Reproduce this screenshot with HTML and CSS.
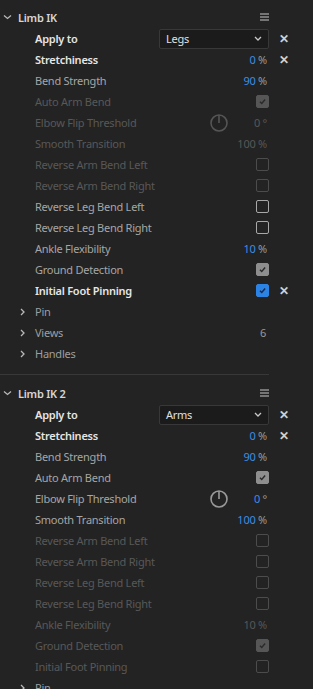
FILE: index.html
```html
<!DOCTYPE html>
<html lang="en">
<head>
  <meta charset="UTF-8" />
  <title>Limb IK</title>
  <link rel="stylesheet" href="styles.css">
</head>
<body>

<div class="section">
  <div class="head">
    <svg class="caret" width="9" height="6" viewBox="0 0 9 6"><path d="M1 1.5 L4.5 4.5 L8 1.5" /></svg>
    <span class="title">Limb IK</span>
    <svg class="menu" width="9" height="8" viewBox="0 0 9 8"><path d="M0 1h9M0 4h9M0 7h9" /></svg>
  </div>

  <div class="row on"><span class="label">Apply to</span>
    <div class="select">Legs<svg width="8" height="5" viewBox="0 0 8 5"><path d="M1 1 L4 4 L7 1" /></svg></div>
    <span class="x">✕</span></div>
  <div class="row on"><span class="label">Stretchiness</span><span class="val"><b>0</b> %</span><span class="x">✕</span></div>
  <div class="row"><span class="label">Bend Strength</span><span class="val"><b>90</b> %</span><span class="x"></span></div>
  <div class="row off"><span class="label">Auto Arm Bend</span><span class="box checked"><svg viewBox="0 0 13 13"><path d="M3.5 6.8 L5.6 8.8 L9.6 4.2" /></svg></span><span class="x"></span></div>
  <div class="row off"><span class="label">Elbow Flip Threshold</span>
    <svg class="dial" width="20" height="20" viewBox="0 0 20 20"><circle cx="10" cy="10" r="8" /><path d="M10 2 V10" /></svg>
    <span class="val deg">0 °</span><span class="x"></span></div>
  <div class="row off"><span class="label">Smooth Transition</span><span class="val">100 %</span><span class="x"></span></div>
  <div class="row off"><span class="label">Reverse Arm Bend Left</span><span class="box"></span><span class="x"></span></div>
  <div class="row off"><span class="label">Reverse Arm Bend Right</span><span class="box"></span><span class="x"></span></div>
  <div class="row"><span class="label">Reverse Leg Bend Left</span><span class="box"></span><span class="x"></span></div>
  <div class="row"><span class="label">Reverse Leg Bend Right</span><span class="box"></span><span class="x"></span></div>
  <div class="row"><span class="label">Ankle Flexibility</span><span class="val"><b>10</b> %</span><span class="x"></span></div>
  <div class="row"><span class="label">Ground Detection</span><span class="box checked"><svg viewBox="0 0 13 13"><path d="M3.5 6.8 L5.6 8.8 L9.6 4.2" /></svg></span><span class="x"></span></div>
  <div class="row on"><span class="label">Initial Foot Pinning</span><span class="box checked blue"><svg viewBox="0 0 13 13"><path d="M3.5 6.8 L5.6 8.8 L9.6 4.2" /></svg></span><span class="x">✕</span></div>

  <div class="group"><svg class="arrow" width="5" height="8" viewBox="0 0 5 8"><path d="M1 1 L4 4 L1 7" /></svg><span class="label">Pin</span></div>
  <div class="group"><svg class="arrow" width="5" height="8" viewBox="0 0 5 8"><path d="M1 1 L4 4 L1 7" /></svg><span class="label">Views</span><span class="count">6</span></div>
  <div class="group"><svg class="arrow" width="5" height="8" viewBox="0 0 5 8"><path d="M1 1 L4 4 L1 7" /></svg><span class="label">Handles</span></div>
</div>

<div class="divider"></div>

<div class="section second">
  <div class="head">
    <svg class="caret" width="9" height="6" viewBox="0 0 9 6"><path d="M1 1.5 L4.5 4.5 L8 1.5" /></svg>
    <span class="title">Limb IK 2</span>
    <svg class="menu" width="9" height="8" viewBox="0 0 9 8"><path d="M0 1h9M0 4h9M0 7h9" /></svg>
  </div>

  <div class="row on"><span class="label">Apply to</span>
    <div class="select">Arms<svg width="8" height="5" viewBox="0 0 8 5"><path d="M1 1 L4 4 L7 1" /></svg></div>
    <span class="x">✕</span></div>
  <div class="row on"><span class="label">Stretchiness</span><span class="val"><b>0</b> %</span><span class="x">✕</span></div>
  <div class="row"><span class="label">Bend Strength</span><span class="val"><b>90</b> %</span><span class="x"></span></div>
  <div class="row"><span class="label">Auto Arm Bend</span><span class="box checked"><svg viewBox="0 0 13 13"><path d="M3.5 6.8 L5.6 8.8 L9.6 4.2" /></svg></span><span class="x"></span></div>
  <div class="row"><span class="label">Elbow Flip Threshold</span>
    <svg class="dial" width="20" height="20" viewBox="0 0 20 20"><circle cx="10" cy="10" r="8" /><path d="M10 2 V10" /></svg>
    <span class="val deg"><b>0</b> °</span><span class="x"></span></div>
  <div class="row"><span class="label">Smooth Transition</span><span class="val"><b>100</b> %</span><span class="x"></span></div>
  <div class="row off"><span class="label">Reverse Arm Bend Left</span><span class="box"></span><span class="x"></span></div>
  <div class="row off"><span class="label">Reverse Arm Bend Right</span><span class="box"></span><span class="x"></span></div>
  <div class="row off"><span class="label">Reverse Leg Bend Left</span><span class="box"></span><span class="x"></span></div>
  <div class="row off"><span class="label">Reverse Leg Bend Right</span><span class="box"></span><span class="x"></span></div>
  <div class="row off"><span class="label">Ankle Flexibility</span><span class="val">10 %</span><span class="x"></span></div>
  <div class="row off"><span class="label">Ground Detection</span><span class="box checked"><svg viewBox="0 0 13 13"><path d="M3.5 6.8 L5.6 8.8 L9.6 4.2" /></svg></span><span class="x"></span></div>
  <div class="row off"><span class="label">Initial Foot Pinning</span><span class="box"></span><span class="x"></span></div>

  <div class="group"><svg class="arrow" width="5" height="8" viewBox="0 0 5 8"><path d="M1 1 L4 4 L1 7" /></svg><span class="label">Pin</span></div>
</div>

</body>
</html>
```

FILE: styles.css
```css
body { margin: 0; background: #232323; font-family: "Noto Sans", sans-serif; font-size: 11px; letter-spacing: -0.25px; color: #a6a6a6; overflow: hidden; height: 689px; }

.head { display: flex; align-items: center; height: 22px; padding-top: 6px; padding-left: 3px; width: 266px; }
.second .head { padding-top: 7px; }
.caret { fill: none; stroke: #b8b8b8; stroke-width: 1.3; margin-right: 6px; }
.title { flex: 1; color: #d6d6d6; font-weight: 600; font-size: 11px; }
.menu { stroke: #c8c8c8; stroke-width: 1; }

.row { display: flex; align-items: center; height: 21px; padding-left: 35px; padding-right: 14px; }
.label { flex: 1; white-space: nowrap; }
.row.on .label { color: #e6e6e6; font-weight: 600; }
.row.off .label { color: #585858; }
.x { width: 30px; text-align: center; color: #d0d0d0; font-size: 12px; font-weight: 700; }

.select { width: 96px; height: 18px; background: #1b1b1b; border: 1px solid #383838; border-radius: 2px; display: flex; align-items: center; justify-content: space-between; padding: 0 6px; color: #e0e0e0; }
.select svg { fill: none; stroke: #c8c8c8; stroke-width: 1.3; }

.val { color: #9a9a9a; padding-right: 2px; }
.val b { font-weight: 400; color: #3b8ee6; }
.row.off .val { color: #575757; }
.deg { width: 38px; text-align: right; }

.dial { fill: none; stroke: #9a9a9a; stroke-width: 1.6; }
.row.off .dial { stroke: #555; }

.box { width: 11px; height: 11px; border: 1px solid #a8a8a8; border-radius: 2px; display: flex; }
.row.off .box { border-color: #4c4c4c; }
.box.checked { background: #8e8e8e; border-color: #8e8e8e; }
.row.off .box.checked { background: #565656; border-color: #565656; }
.box svg { width: 11px; height: 11px; fill: none; stroke: #2a2a2a; stroke-width: 1.7; }
.box.blue { background: #2c83e6; border-color: #2c83e6; }
.box.blue svg { stroke: #15294a; }

.group { display: flex; align-items: center; height: 21px; padding-left: 20px; width: 249px; }
.arrow { fill: none; stroke: #b8b8b8; stroke-width: 1.3; margin-right: 10px; }
.group .label { color: #9e9e9e; }
.count { color: #9a9a9a; padding-right: 3px; }

.divider { height: 1px; background: #383838; width: 269px; margin-top: 10px; }
```
